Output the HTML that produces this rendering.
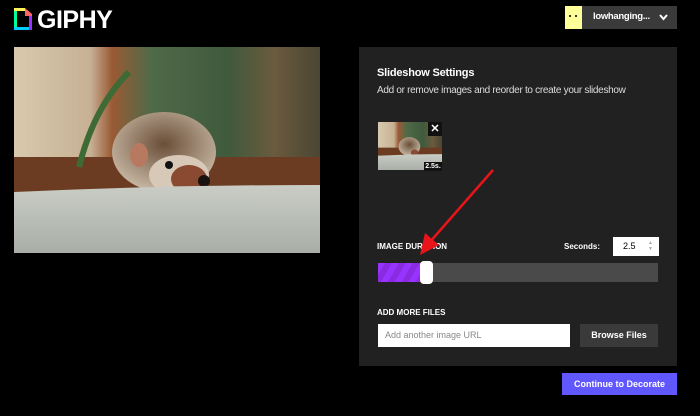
<!DOCTYPE html>
<html><head><meta charset="utf-8"><style>
*{margin:0;padding:0;box-sizing:border-box}
body{width:700px;height:416px;background:#000;position:relative;overflow:hidden;font-family:"Liberation Sans",sans-serif;color:#fff}
.abs{position:absolute}
</style></head><body>
<svg class="abs" style="left:14px;top:8px" width="18" height="22" viewBox="0 0 18 22">
<rect x="0" y="0" width="3" height="22" fill="#00ff99"/>
<rect x="0" y="19" width="18" height="3" fill="#00ccff"/>
<rect x="15" y="6" width="3" height="16" fill="#9933ff"/>
<rect x="0" y="0" width="11" height="3" fill="#fff35c"/>
<polygon points="11,0 18,6 18,8 11,8" fill="#ff6666"/>
</svg>
<div class="abs" style="left:37px;top:6px;font-size:25px;font-weight:bold;letter-spacing:-0.5px">GIPHY</div>
<div class="abs" style="left:565px;top:6px;width:112px;height:23px;background:#3a3a3a"></div>
<div class="abs" style="left:565px;top:6px;width:17px;height:23px;background:#ffff99"></div>
<div class="abs" style="left:569px;top:15px;width:2px;height:2px;background:#333"></div>
<div class="abs" style="left:575px;top:15px;width:2px;height:2px;background:#333"></div>
<div class="abs" style="left:593px;top:11px;font-size:9.5px;font-weight:bold;letter-spacing:-0.3px">lowhanging...</div>
<svg class="abs" style="left:659px;top:14px" width="9" height="7" viewBox="0 0 9 7"><path d="M1 1 L4.5 5 L8 1" stroke="#fff" stroke-width="2" fill="none"/></svg>

<svg class="abs" style="left:14px;top:47px" width="306" height="206" viewBox="0 0 306 206">
<defs>
<linearGradient id="bg" x1="0" x2="1" y1="0" y2="0"><stop offset="0" stop-color="#d8c9ad"/><stop offset=".25" stop-color="#c7b194"/><stop offset=".32" stop-color="#9a5a35"/><stop offset=".45" stop-color="#4f6a48"/><stop offset=".7" stop-color="#3f5a3c"/><stop offset=".85" stop-color="#6b5a3e"/><stop offset="1" stop-color="#4a4632"/></linearGradient>
<linearGradient id="pot" x1="0" x2="0" y1="0" y2="1"><stop offset="0" stop-color="#c9cdc5"/><stop offset="1" stop-color="#a9aea6"/></linearGradient>
<radialGradient id="hh" cx=".5" cy=".4" r=".6"><stop offset="0" stop-color="#6a4e38"/><stop offset="1" stop-color="#c8b8a4"/></radialGradient>
</defs>
<rect width="306" height="206" fill="url(#bg)"/>
<rect y="110" width="306" height="35" fill="#6b3c22"/>
<path d="M65 120 Q80 60 115 25" stroke="#3d6a35" stroke-width="6" fill="none"/>
<ellipse cx="150" cy="105" rx="52" ry="40" fill="url(#hh)"/>
<ellipse cx="165" cy="128" rx="30" ry="20" fill="#d8c8b8"/>
<ellipse cx="175" cy="132" rx="18" ry="14" fill="#8a4a32"/>
<ellipse cx="125" cy="108" rx="9" ry="12" fill="#b77a60"/>
<circle cx="155" cy="118" r="4" fill="#111"/>
<circle cx="190" cy="134" r="6" fill="#1a1210"/>
<path d="M0 145 Q150 138 306 138 L306 206 L0 206 Z" fill="url(#pot)"/>
</svg>

<div class="abs" style="left:359px;top:47px;width:318px;height:319px;background:#212121"></div>
<div class="abs" style="left:377px;top:67px;font-size:11px;font-weight:bold;letter-spacing:-0.2px">Slideshow Settings</div>
<div class="abs" style="left:377px;top:85px;font-size:10px;color:#ddd;letter-spacing:-0.3px">Add or remove images and reorder to create your slideshow</div>

<svg class="abs" style="left:378px;top:122px" width="64" height="48" viewBox="0 0 306 206" preserveAspectRatio="none">
<rect width="306" height="206" fill="url(#bg)"/>
<rect y="110" width="306" height="35" fill="#6b3c22"/>
<ellipse cx="150" cy="105" rx="52" ry="40" fill="url(#hh)"/>
<ellipse cx="175" cy="132" rx="18" ry="14" fill="#8a4a32"/>
<path d="M0 145 Q150 138 306 138 L306 206 L0 206 Z" fill="url(#pot)"/>
</svg>
<div class="abs" style="left:428px;top:122px;width:14px;height:14px;background:#111;font-size:11px;font-weight:bold;text-align:center;line-height:14px">✕</div>
<div class="abs" style="left:424px;top:162px;width:18px;height:9px;background:#111;font-size:7px;font-weight:bold;text-align:center;line-height:9px">2.5s.</div>

<div class="abs" style="left:377px;top:242px;font-size:8px;font-weight:bold">IMAGE DURATION</div>
<div class="abs" style="left:564px;top:242px;font-size:8px;font-weight:bold">Seconds:</div>
<div class="abs" style="left:613px;top:237px;width:46px;height:19px;background:#fff;color:#000;font-size:9px;padding:4px 0 0 10px">2.5</div>
<div class="abs" style="left:648px;top:240px;width:7px;height:13px;color:#aaa;font-size:5px;line-height:6px">▲<br>▼</div>
<div class="abs" style="left:378px;top:263px;width:280px;height:19px;background:#4a4a4a"></div>
<div class="abs" style="left:378px;top:263px;width:50px;height:19px;background:repeating-linear-gradient(120deg,#9933ff 0 6px,#8a2be2 6px 12px)"></div>
<div class="abs" style="left:420px;top:261px;width:13px;height:23px;background:#fff;border-radius:4px"></div>

<svg class="abs" style="left:415px;top:165px" width="82" height="95" viewBox="0 0 82 95"><path d="M78 5 L14 78" stroke="#e8141a" stroke-width="2.5"/><polygon points="5,90 10,68 24,80" fill="#e8141a"/></svg>

<div class="abs" style="left:377px;top:308px;font-size:8px;font-weight:bold">ADD MORE FILES</div>
<div class="abs" style="left:378px;top:324px;width:192px;height:23px;background:#fff;color:#888;font-size:9px;padding:6px 0 0 7px">Add another image URL</div>
<div class="abs" style="left:580px;top:324px;width:78px;height:23px;background:#3a3a3a;font-size:9px;font-weight:bold;text-align:center;line-height:23px">Browse Files</div>
<div class="abs" style="left:562px;top:373px;width:115px;height:22px;background:#6157ff;font-size:9px;font-weight:bold;text-align:center;line-height:22px">Continue to Decorate</div>
</body></html>
